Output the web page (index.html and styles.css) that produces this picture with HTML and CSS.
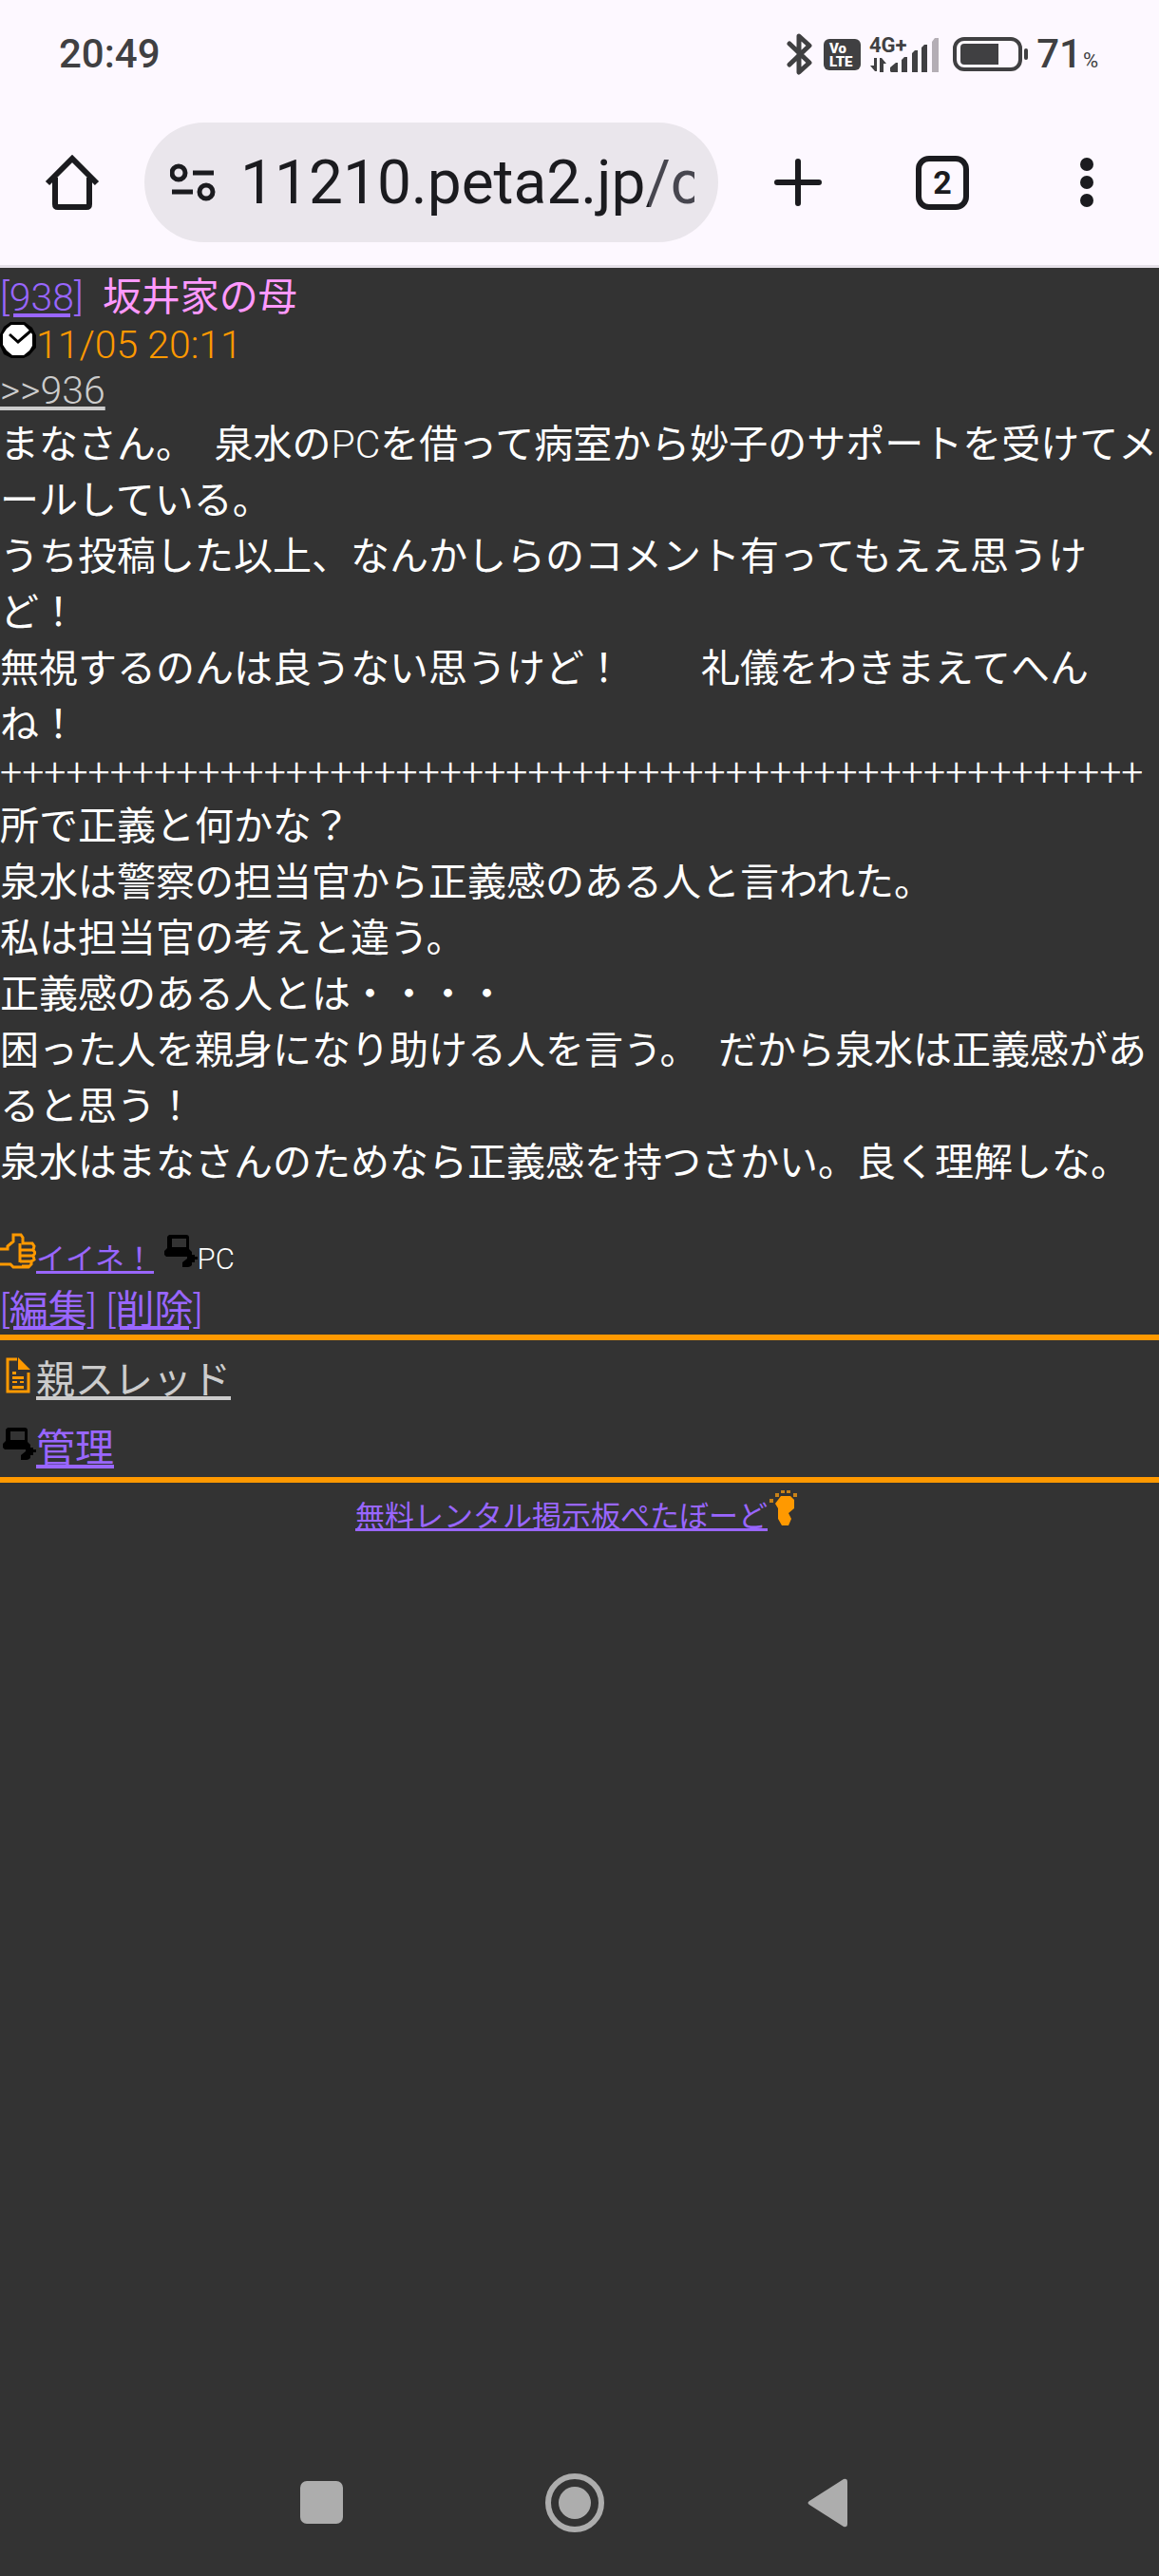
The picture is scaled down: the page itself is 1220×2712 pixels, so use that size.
FILE: index.html
```
<!DOCTYPE html>
<html lang="ja">
  <head>
    <meta charset="utf-8" />
    <meta name="viewport" content="width=device-width, initial-scale=1.0" />
    <title>坂井家の母</title>
    <link rel="stylesheet" href="styles.css">
  </head>
  <body>
    <svg class="sprite" aria-hidden="true">
      <symbol id="laptop" viewBox="0 0 38 38">
        <path fill="#000" fill-rule="evenodd" d="M8 2h18q3 0 3 3v12l3 3v3h3v2h3v3h-3v3h-3v3q-2 2-4 2h-6v-5l5-4v-2H5l-2-2v-4l3-3V4zM11 6v9h15V6z" />
      </symbol>
    </svg>

    <div class="status">
      <span class="time">20:49</span>
      <svg class="bluetooth" width="28" height="44" viewBox="0 0 28 44" aria-hidden="true">
        <path d="M3 11l21 20-11 10V3l11 10L3 33" />
      </svg>
      <svg class="volte" width="40" height="34" viewBox="0 0 40 34">
        <rect width="39" height="33" y="1" rx="6" />
        <text x="6" y="16">Vo</text>
        <text x="6" y="30">LTE</text>
      </svg>
      <svg class="signal" width="74" height="50" viewBox="0 -6 74 50">
        <text x="0" y="17">4G+</text>
        <path d="M8 23v14h-2l-5-6h4v-8zM11 23h2l5 6h-3v9h-4zM22 37v-4l6-5h2v10h-7zM34 38V25l3-3h3v16zM45 38V18l3-3h3v23zM55 38V12l3-3h3v29z" />
        <path class="off" d="M66 38V6l3-4h4v36z" />
      </svg>
      <svg class="battery" width="80" height="36" viewBox="0 0 80 36" aria-hidden="true">
        <rect class="case" x="2" y="2" width="69" height="32" rx="10" />
        <path d="M12 7h36v22H12q-4 0-4-4V11q0-4 4-4z" />
        <rect x="75" y="12" width="4" height="12" rx="2" />
      </svg>
      <span class="level">71</span><small class="percent">%</small>
    </div>

    <header class="toolbar">
      <button class="tool" aria-label="ホーム">
        <svg width="58" height="60" viewBox="0 0 58 60">
          <path d="M3 31L29 5l26 26M11 25v28q0 3 3 3h30q3 0 3-3V25" />
        </svg>
      </button>
      <div class="omnibox">
        <svg width="48" height="42" viewBox="0 0 48 42" aria-hidden="true">
          <circle cx="9" cy="11" r="7" />
          <path d="M24 11h22M2 31h22" />
          <circle cx="38" cy="31" r="7" />
        </svg>
        <input class="url" type="text" value="11210.peta2.jp/c" aria-label="アドレス">
      </div>
      <button class="tool" aria-label="新しいタブ">
        <svg width="56" height="56" viewBox="0 0 56 56">
          <path d="M28 6v44M6 28h44" stroke-linecap="round" />
        </svg>
      </button>
      <button class="tool" aria-label="タブ">
        <span class="tabs">2</span>
      </button>
      <button class="tool" aria-label="メニュー">
        <svg class="dots" width="14" height="54" viewBox="0 0 14 54">
          <circle cx="7" cy="8" r="7" />
          <circle cx="7" cy="27" r="7" />
          <circle cx="7" cy="46" r="7" />
        </svg>
      </button>
    </header>

    <main>
      <article class="post">
        <a href="#938">[938]</a>&nbsp; <span class="name">坂井家の母</span><br>
        <span class="date"><svg class="icon" viewBox="0 0 38 38" aria-hidden="true">
          <path fill="#000" d="M11 0h15l8 6 4 8v13l-7 8-6 3H12l-8-4-4-9V13l4-8z" />
          <path fill="#fff" d="M12 3h13l5 5 4 5v12l-3 5-6 5H13l-6-5-4-6V13l4-6z" />
          <path fill="none" stroke="#000" stroke-width="3" d="M10 13l9 8L34 8" />
        </svg>11/05 20:11</span><br>
        <a class="visited" href="#936">&gt;&gt;936</a>
        <p class="message">
          まなさん。　泉水のPCを借って病室から妙子のサポートを受けてメールしている。<br>
          うち投稿した以上、なんかしらのコメント有ってもええ思うけど！<br>
          無視するのんは良うない思うけど！　　礼儀をわきまえてへんね！
          <span class="divider">++++++++++++++++++++++++++++++++++++++++++++++++++++</span>
          所で正義と何かな？<br>
          泉水は警察の担当官から正義感のある人と言われた。<br>
          私は担当官の考えと違う。<br>
          正義感のある人とは・・・・<br>
          困った人を親身になり助ける人を言う。　だから泉水は正義感があると思う！<br>
          泉水はまなさんのためなら正義感を持つさかい。良く理解しな。
        </p>
        <div class="small">
          <svg class="icon" viewBox="0 0 38 38" aria-hidden="true">
            <path class="line" d="M0 17h8v-3l6-5V2h8l2 3v6h10l2 3-1 4 2 3-2 3 1 4-3 2v3l-3 3H14l-3-3H0" />
            <path class="line" d="M21 11v20M21 18h15M21 24h15M21 30h12M23 35h7" />
          </svg><a href="#like">イイネ！</a>
          <svg class="icon" aria-hidden="true"><use href="#laptop" /></svg>PC
        </div>
        <a href="#edit">[編集]</a> <a href="#delete">[削除]</a>
      </article>
      <hr>
      <nav class="links">
        <div>
          <svg class="icon" viewBox="0 0 38 38" aria-hidden="true">
            <path class="line" d="M18 2H8v34h22V16" />
            <path fill="#f90" d="M19 0l13 13H19zM13 15h4v3h-4zM13 20h12v3H13zM13 25h5v2h-5zM21 25h4v2h-4zM13 30h12v3H13z" />
          </svg><a class="visited" href="#thread">親スレッド</a>
        </div>
        <div>
          <svg class="icon" aria-hidden="true"><use href="#laptop" /></svg><a href="#admin">管理</a>
        </div>
      </nav>
      <hr>
      <footer class="credit">
        <a href="#petaboard">無料レンタル掲示板ぺたぼーど</a><svg class="icon" viewBox="0 0 38 38" aria-hidden="true">
          <path fill="#f90" d="M14 6h10l4 4v9l-6 5 3 6-3 7h-7l-4-7V19l-3-5z" />
          <g fill="#c98218">
            <rect x="2" y="9" width="4" height="4" /><rect x="8" y="3" width="4" height="4" /><rect x="14" width="4" height="3" />
            <rect x="20" width="4" height="3" /><rect x="27" y="3" width="4" height="4" />
          </g>
        </svg>
      </footer>
    </main>

    <nav class="keys">
      <button class="key" aria-label="履歴">
        <svg width="64" height="64" viewBox="0 0 64 64"><rect x="9" y="9" width="45" height="45" rx="7" /></svg>
      </button>
      <button class="key" aria-label="ホーム">
        <svg width="64" height="64" viewBox="0 0 64 64">
          <circle class="ring" cx="32" cy="32" r="28" /><circle cx="32" cy="32" r="17" />
        </svg>
      </button>
      <button class="key" aria-label="戻る">
        <svg width="64" height="64" viewBox="0 0 64 64"><path d="M13 30L49 7q4-1 4 3v44q0 4-4 3L13 34q-3-2 0-4z" /></svg>
      </button>
    </nav>
  </body>
</html>
```

FILE: styles.css
```
* {
  box-sizing: border-box;
}
body {
  display: flex;
  flex-direction: column;
  min-height: 100vh;
  margin: 0;
  background: #333;
  color: #fff;
  font-family: "Roboto Light", Roboto, "Noto Sans CJK JP", sans-serif;
  font-size: 41px;
}
button {
  display: flex;
  align-items: center;
  justify-content: center;
  padding: 0;
  border: 0;
  background: none;
  font: inherit;
}
.sprite {
  position: absolute;
  width: 0;
  height: 0;
}

/* status bar */
.status {
  display: flex;
  align-items: center;
  height: 113px;
  padding: 0 64px 0 62px;
  background: #fdf8ff;
  color: #404042;
  font-family: Roboto, sans-serif;
  font-size: 42px;
  font-weight: 500;
  line-height: 1;
  fill: #404042;
}
.time {
  margin-right: auto;
}
.bluetooth {
  fill: none;
  stroke: #404042;
  stroke-width: 5;
  stroke-linejoin: round;
  stroke-linecap: round;
}
.volte {
  margin-left: 11px;
}
.volte text {
  fill: #fff;
  font-size: 15px;
  font-weight: 900;
}
.signal {
  margin-left: 8px;
}
.signal text {
  font-size: 22px;
  font-weight: 700;
}
.signal .off {
  fill: #b4aeb5;
}
.battery {
  margin: 0 8px 0 14px;
}
.battery .case {
  fill: none;
  stroke: #404042;
  stroke-width: 4;
}
.percent {
  align-self: flex-end;
  margin: 0 0 38px 1px;
  font-size: 22px;
  font-weight: 400;
}

/* browser toolbar */
.toolbar {
  display: flex;
  align-items: center;
  height: 169px;
  padding: 0 0 8px;
  border-bottom: 3px solid #e6e1e9;
  background: #fdf8ff;
}
.tool {
  width: 152px;
  color: #1b1b1f;
}
.tool svg,
.omnibox svg {
  flex: none;
  fill: none;
  stroke: #1b1b1f;
  stroke-width: 6;
}
.omnibox svg {
  stroke-width: 5;
}
.tool .dots {
  fill: #1b1b1f;
  stroke: none;
}
.omnibox {
  display: flex;
  flex: 1;
  align-items: center;
  gap: 26px;
  min-width: 0;
  height: 126px;
  margin-right: 8px;
  padding: 0 25px 0 27px;
  border-radius: 63px;
  background: #eae6ec;
}
.url {
  flex: 1;
  min-width: 0;
  padding: 0;
  border: 0;
  /* the path after the host is a shade lighter */
  background: linear-gradient(90deg, #1b1b1f 430px, #47464f 430px);
  background-clip: text;
  color: transparent;
  font: 400 64px Roboto, sans-serif;
}
.tabs {
  width: 56px;
  height: 57px;
  border: 6px solid #1b1b1f;
  border-radius: 14px;
  font-family: Roboto, sans-serif;
  font-size: 34px;
  font-weight: 700;
  line-height: 45px;
}

/* board */
a {
  color: #96f;
}
.visited {
  color: #ccc;
}
.name {
  color: #f9f;
}
.date {
  color: #f90;
}
main {
  flex: 1;
}
/* first line is scrolled slightly under the toolbar */
.post {
  margin-top: -3px;
}
.message {
  margin: 4px 0 44px;
  line-height: 59px;
}
.divider {
  display: block;
  padding-bottom: 8px;
  line-height: 40px;
}
.icon {
  width: 38px;
  height: 38px;
  vertical-align: baseline;
}
.icon .line {
  fill: none;
  stroke: #f90;
  stroke-width: 3;
}
.small,
.credit {
  font-size: 31px;
}
hr {
  height: 6px;
  margin: 0;
  border: 0;
  background: #f90;
}
.links {
  line-height: 59px;
}
.links div {
  padding-top: 13px;
}
.credit {
  padding-top: 8px;
  text-align: center;
}

/* navigation keys */
.keys {
  display: flex;
  justify-content: center;
  gap: 202px;
  padding: 0 10px 45px 0;
}
.key {
  fill: #adadad;
}
.key .ring {
  fill: none;
  stroke: #adadad;
  stroke-width: 6;
}
```
